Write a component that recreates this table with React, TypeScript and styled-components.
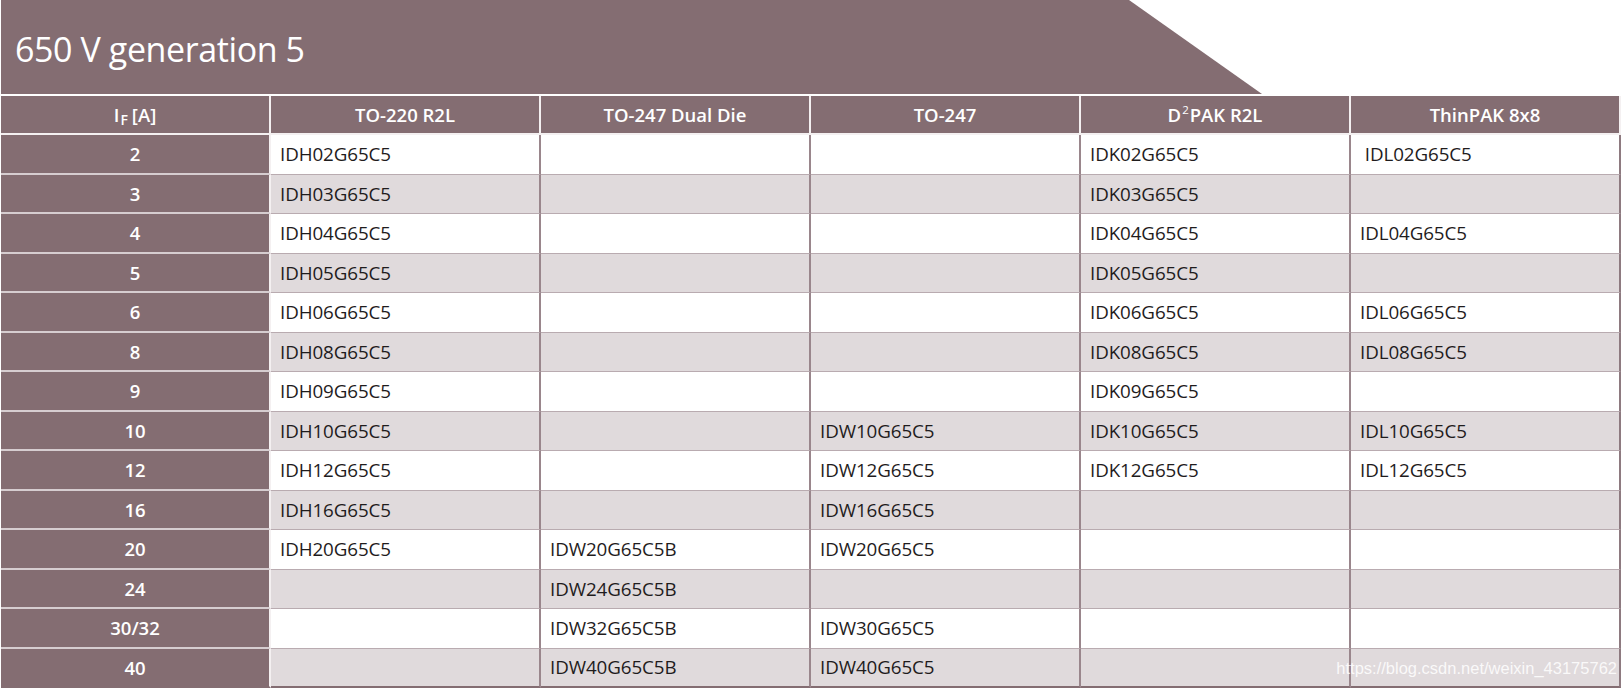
import React from 'react';
import styled, { createGlobalStyle } from 'styled-components';

const GlobalStyle = createGlobalStyle`
  body {
    margin: 0;
    background: #ffffff;
    font-family: "Open Sans", "Noto Sans", sans-serif;
  }
`

const MAUVE = '#846d72'
const ALT = '#e0dadc'

const Page = styled.div`
  position: relative;
  width: 1624px;
  height: 689px;
  padding-left: 1px;
  box-sizing: border-box;
  overflow: hidden;
`

const Banner = styled.div`
  width: 1261px;
  height: 94px;
  background: ${MAUVE};
  clip-path: polygon(0 0, 1128px 0, 100% 100%, 0 100%);
  display: flex;
  align-items: center;
  padding: 4px 0 0 14px;
  box-sizing: border-box;
  margin-bottom: 2px;
  h1 {
    margin: 0;
    color: #ffffff;
    font-weight: 400;
    font-size: 34px;
    letter-spacing: -0.4px;
  }
`

const Grid = styled.div`
  display: grid;
  grid-template-columns: repeat(6, 270px);
  grid-template-rows: 39px repeat(14, 39.5px);
`

type CellKind = 'head' | 'label' | 'data'

const Cell = styled.div<{ $kind: CellKind; $alt?: boolean; $last?: boolean; $lastCol?: boolean }>`
  box-sizing: border-box;
  display: flex;
  align-items: center;
  white-space: pre;
  overflow: hidden;
  ${p => p.$kind === 'head' && `
    background: ${MAUVE};
    color: #ffffff;
    font-weight: 600;
    font-size: 18.5px;
    justify-content: center;
    border-right: 2px solid #f4f0f1;
    border-bottom: 2px solid #f4f0f1;
  `}
  ${p => p.$kind === 'label' && `
    background: ${MAUVE};
    color: #ffffff;
    font-weight: 600;
    font-size: 18.5px;
    justify-content: center;
    border-right: 2px solid #f4f0f1;
    border-bottom: 2px solid #d6cdd0;
  `}
  ${p => p.$kind === 'data' && `
    background: ${p.$alt ? ALT : '#ffffff'};
    color: #1f1c1d;
    font-size: 18.8px;
    letter-spacing: -0.1px;
    padding-left: 9px;
    border-right: 2px solid #9a868c;
    border-bottom: 1px solid #b9abb0;
  `}
  ${p => p.$last && `border-bottom: 2px solid ${MAUVE};`}
  ${p => p.$lastCol && p.$kind !== 'head' && `border-right: 2px solid #8e7a80;`}
  sub {
    font-size: 14px;
    line-height: 1;
    position: relative;
    top: 5px;
    margin: 0 4px 0 1px;
  }
  sup {
    font-size: 11.5px;
    font-weight: 400;
    line-height: 1;
    position: relative;
    top: -5px;
    margin: 0 1px;
  }
`

const Watermark = styled.div`
  position: absolute;
  right: 7px;
  bottom: 11px;
  font-family: "Liberation Sans", Arial, sans-serif;
  font-size: 16.5px;
  color: rgba(255, 255, 255, 0.85);
  pointer-events: none;
`

const headers: React.ReactNode[] = [
  <><span>I</span><sub>F</sub><span>[A]</span></>,
  'TO-220 R2L',
  'TO-247 Dual Die',
  'TO-247',
  <><span>D</span><sup>2</sup><span>PAK R2L</span></>,
  'ThinPAK 8x8',
]

const rows: string[][] = [
  ['2', 'IDH02G65C5', '', '', 'IDK02G65C5', ' IDL02G65C5'],
  ['3', 'IDH03G65C5', '', '', 'IDK03G65C5', ''],
  ['4', 'IDH04G65C5', '', '', 'IDK04G65C5', 'IDL04G65C5'],
  ['5', 'IDH05G65C5', '', '', 'IDK05G65C5', ''],
  ['6', 'IDH06G65C5', '', '', 'IDK06G65C5', 'IDL06G65C5'],
  ['8', 'IDH08G65C5', '', '', 'IDK08G65C5', 'IDL08G65C5'],
  ['9', 'IDH09G65C5', '', '', 'IDK09G65C5', ''],
  ['10', 'IDH10G65C5', '', 'IDW10G65C5', 'IDK10G65C5', 'IDL10G65C5'],
  ['12', 'IDH12G65C5', '', 'IDW12G65C5', 'IDK12G65C5', 'IDL12G65C5'],
  ['16', 'IDH16G65C5', '', 'IDW16G65C5', '', ''],
  ['20', 'IDH20G65C5', 'IDW20G65C5B', 'IDW20G65C5', '', ''],
  ['24', '', 'IDW24G65C5B', '', '', ''],
  ['30/32', '', 'IDW32G65C5B', 'IDW30G65C5', '', ''],
  ['40', '', 'IDW40G65C5B', 'IDW40G65C5', '', ''],
]

const App = () => {
  return (
    <>
      <GlobalStyle />
      <Page>
        <Banner>
          <h1>650 V generation 5</h1>
        </Banner>
        <Grid>
          {headers.map((h, i) => (
            <Cell key={'h' + i} $kind='head'>{h}</Cell>
          ))}
          {rows.map((row, r) => row.map((value, c) => (
            <Cell
              key={r + '-' + c}
              $kind={c === 0 ? 'label' : 'data'}
              $alt={r % 2 === 1}
              $last={r === rows.length - 1}
              $lastCol={c === row.length - 1}
            >
              {value}
            </Cell>
          )))}
        </Grid>
        <Watermark>https://blog.csdn.net/weixin_43175762</Watermark>
      </Page>
    </>
  );
};

export default App;
